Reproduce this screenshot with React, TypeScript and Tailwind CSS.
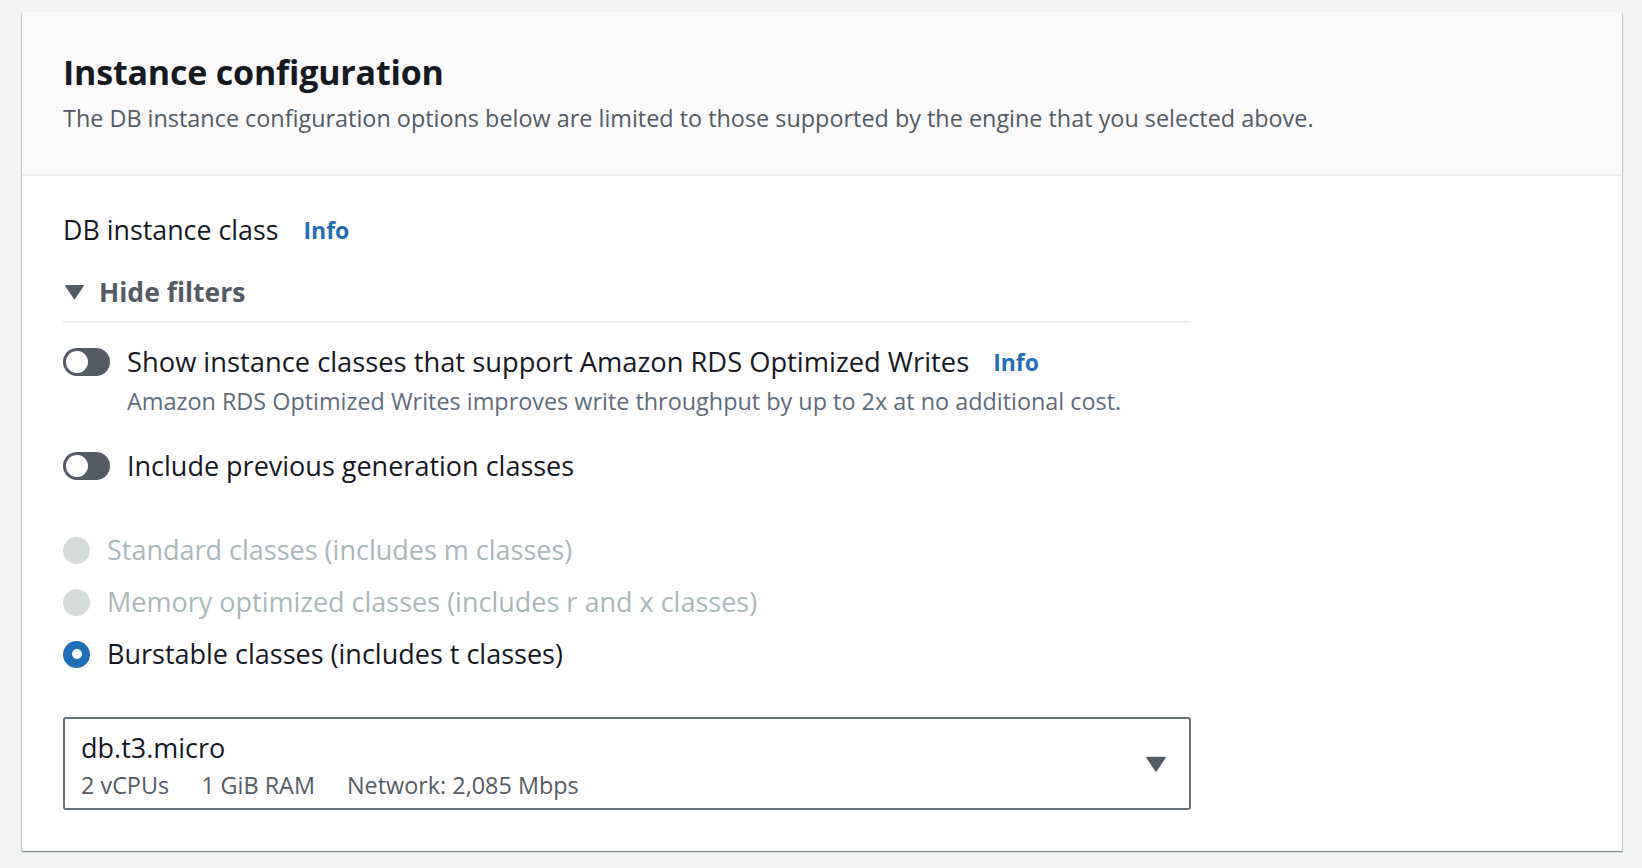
import React from "react";

function Toggle() {
  return (
    <div className="flex h-[28px] w-[47px] shrink-0 items-center rounded-full bg-[#545b64] px-[3px]">
      <div className="h-[22px] w-[22px] rounded-full bg-white" />
    </div>
  );
}

function Radio({ state }: { state: "disabled" | "checked" }) {
  if (state === "checked") {
    return (
      <div className="flex h-[27px] w-[27px] shrink-0 items-center justify-center rounded-full bg-[#1f6fb8]">
        <div className="h-[10px] w-[10px] rounded-full bg-white" />
      </div>
    );
  }
  return <div className="h-[27px] w-[27px] shrink-0 rounded-full bg-[#d5dbdb]" />;
}

function Caret({ className }: { className?: string }) {
  return (
    <svg viewBox="0 0 20 16" className={className} aria-hidden="true">
      <path d="M1 1.5 L19 1.5 L10 15 Z" fill="#545b64" stroke="#545b64" strokeWidth="1.5" strokeLinejoin="round" />
    </svg>
  );
}

export default function App() {
  const radios: { label: string; state: "disabled" | "checked" }[] = [
    { label: "Standard classes (includes m classes)", state: "disabled" },
    { label: "Memory optimized classes (includes r and x classes)", state: "disabled" },
    { label: "Burstable classes (includes t classes)", state: "checked" },
  ];

  return (
    <div className="min-h-[868px] w-[1642px] bg-[#f2f3f3] pl-[22px] pt-[12px] font-['Open_Sans',sans-serif] text-[#16191f]">
      <div className="w-[1600px] bg-white shadow-[0_1px_1px_0_rgba(0,28,36,0.3),1px_1px_1px_0_rgba(0,28,36,0.15),-1px_1px_1px_0_rgba(0,28,36,0.15)]">
        {/* header */}
        <div className="h-[164px] border-b-2 border-[#eaeded] bg-[#fafafa] pl-[41px] pt-[38px]">
          <h2 className="text-[34px] font-bold leading-[44px] tracking-[-0.2px]">Instance configuration</h2>
          <p className="mt-[8px] text-[23.4px] leading-[32px] text-[#545b64]">
            The DB instance configuration options below are limited to those supported by the engine that you selected above.
          </p>
        </div>

        {/* body */}
        <div className="pl-[41px] pt-[36px] pb-[41px]">
          <div className="flex items-center text-[26.8px] leading-[36px]">
            <span>DB instance class</span>
            <span className="ml-[25px] text-[23px] font-bold text-[#1f6fb8]">Info</span>
          </div>

          <div className="mt-[26px] w-[1128px] border-b-2 border-[#eaeded] pb-[11px]">
            <div className="flex items-center text-[26.5px] font-bold leading-[36px] text-[#545b64]">
              <Caret className="ml-[2px] h-[16px] w-[19px]" />
              <span className="ml-[15px]">Hide filters</span>
            </div>
          </div>

          <div className="mt-[21px] flex items-center">
            <Toggle />
            <span className="ml-[17px] text-[27.3px] leading-[36px]">
              Show instance classes that support Amazon RDS Optimized Writes
            </span>
            <span className="ml-[24px] text-[23px] font-bold leading-[36px] text-[#1f6fb8]">Info</span>
          </div>
          <div className="ml-[64px] mt-[5px] text-[23.4px] leading-[32px] text-[#5f6b7a]">
            Amazon RDS Optimized Writes improves write throughput by up to 2x at no additional cost.
          </div>

          <div className="mt-[31px] flex items-center">
            <Toggle />
            <span className="ml-[17px] text-[27px] leading-[36px]">Include previous generation classes</span>
          </div>

          <div className="mt-[40px] flex flex-col">
            {radios.map((r) => (
              <div key={r.label} className="flex h-[52px] items-center">
                <Radio state={r.state} />
                <span
                  className={
                    r.state === "disabled"
                      ? "ml-[17px] text-[27px] leading-[36px] text-[#aab7b8]"
                      : "ml-[17px] text-[27px] leading-[36px] text-[#16191f]"
                  }
                >
                  {r.label}
                </span>
              </div>
            ))}
          </div>

          <div className="mt-[37px] flex h-[93px] w-[1128px] items-center rounded-[3px] border-2 border-[#687078] pl-[16px] pr-[23px]">
            <div className="flex-1 pt-[4px]">
              <div className="text-[27px] leading-[34px]">db.t3.micro</div>
              <div className="mt-[5px] flex gap-[32px] text-[23.4px] leading-[30px] text-[#545b64]">
                <span>2 vCPUs</span>
                <span>1 GiB RAM</span>
                <span>Network: 2,085 Mbps</span>
              </div>
            </div>
            <Caret className="h-[16px] w-[20px]" />
          </div>
        </div>
      </div>
    </div>
  );
}
